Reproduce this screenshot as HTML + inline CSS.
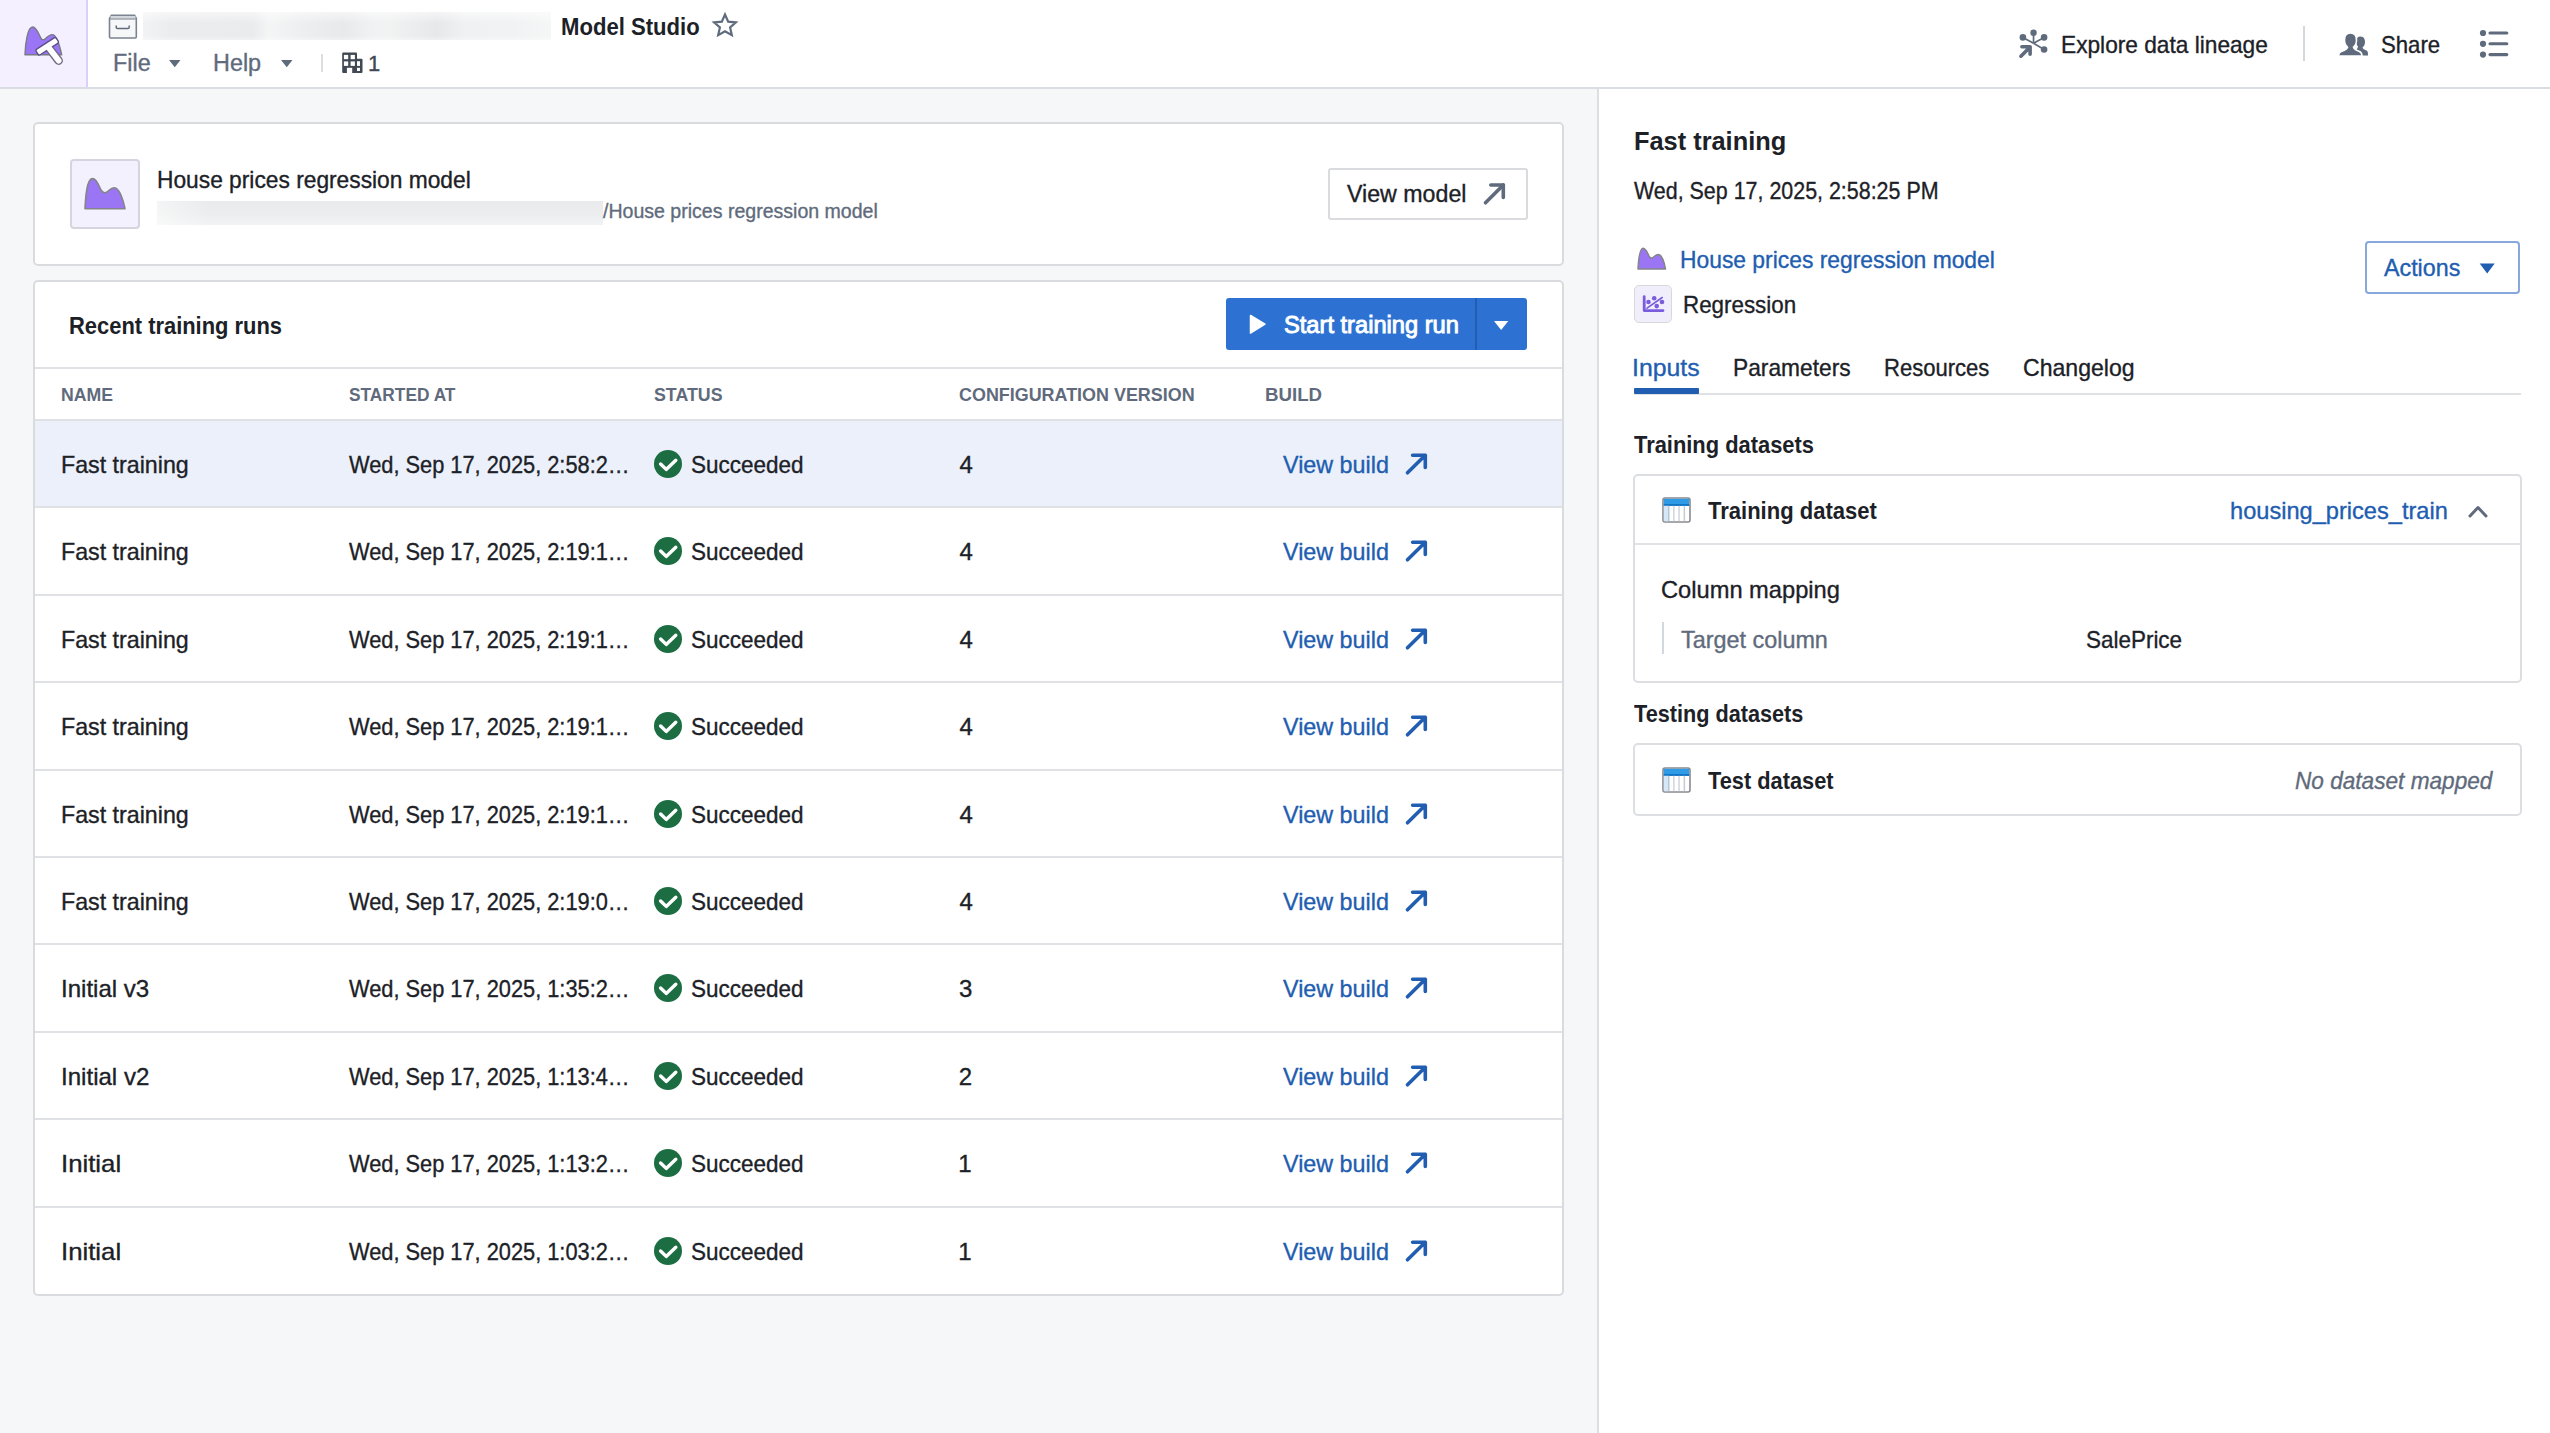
<!DOCTYPE html>
<html><head><meta charset="utf-8"><title>Model Studio</title>
<style>
html,body{margin:0;padding:0;width:2550px;height:1433px;overflow:hidden;background:#f6f7f9;font-family:"Liberation Sans",sans-serif;}
.t{position:absolute;white-space:nowrap;transform-origin:0 0;}
.a{position:absolute;box-sizing:border-box;}
svg{position:absolute;overflow:visible;}
</style></head><body>
<!-- ============ HEADER ============ -->
<div class="a" style="left:0;top:0;width:2550px;height:87px;background:#ffffff;"></div>
<div class="a" style="left:0;top:87px;width:2550px;height:2px;background:#d9dde3;"></div>
<div class="a" style="left:0;top:0;width:86px;height:87px;background:#f4f0ff;"></div>
<div class="a" style="left:86px;top:0;width:1.5px;height:87px;background:#dccffd;"></div>
<!-- logo -->
<svg style="left:0;top:0" width="86" height="87" viewBox="0 0 86 87">
  <path d="M25 54.8 C25.3 44 27.5 27 32.7 27 C37 27 39.5 36.5 41.5 39 C42.5 40 43.5 40 44.5 39.5 C46.5 37.5 49 34.6 52.4 34.6 C56.5 34.6 60 47 61.7 54.8 Z" fill="#9a76f6" stroke="#777b82" stroke-width="1.4" stroke-linejoin="round"/>
  <line x1="48.6" y1="47.5" x2="58.6" y2="60.6" stroke="#6f6b85" stroke-width="8.6" stroke-linecap="round"/>
  <rect x="35.2" y="43" width="24" height="6.6" rx="1.6" transform="rotate(-33 47.2 46.3)" fill="#fff" stroke="#5b4f8a" stroke-width="1.4"/>
  <line x1="48.6" y1="47.5" x2="58.6" y2="60.6" stroke="#fff" stroke-width="5.8" stroke-linecap="round"/>
</svg>
<!-- archive icon -->
<svg style="left:106px;top:12px" width="34" height="30" viewBox="0 0 34 30">
  <path d="M5.5 3.2 L28.5 3.2 L30.3 6.5 L30.3 25 Q30.3 26 29.3 26 L4.5 26 Q3.5 26 3.5 25 L3.5 6.5 Z" fill="#f6f7f9" stroke="#7b838e" stroke-width="1.6" stroke-linejoin="round"/>
  <rect x="4.5" y="4" width="25" height="2.6" fill="#d3d8de"/><line x1="4" y1="7" x2="29.8" y2="7" stroke="#8a929c" stroke-width="1.2"/>
  <path d="M10.2 13.6 L10.2 15.2 Q10.2 16.6 11.6 16.6 L21.8 16.6 Q23.2 16.6 23.2 15.2 L23.2 13.6" fill="none" stroke="#5f6b7c" stroke-width="1.5"/>
</svg>
<!-- blurred path -->
<div class="a" style="left:143px;top:12px;width:408px;height:28px;background:linear-gradient(180deg,rgba(255,255,255,.55) 0%,rgba(255,255,255,0) 40%,rgba(255,255,255,0) 85%,rgba(255,255,255,.35) 100%),linear-gradient(90deg,#f2f3f4 0%,#ebeced 7%,#eaebed 27%,#f4f5f5 31%,#eeeff0 38%,#e8e9eb 49%,#f0f1f2 56%,#f1f2f2 60%,#e7e8ea 72%,#f0f1f2 79%,#f1f2f3 90%,#f5f6f6 100%);"></div>
<!-- star -->
<svg style="left:710px;top:11px" width="30" height="30" viewBox="0 0 30 30">
  <path d="M15 3.5 L18.2 10.6 L25.9 11.4 L20.1 16.5 L21.8 24.1 L15 20.2 L8.2 24.1 L9.9 16.5 L4.1 11.4 L11.8 10.6 Z" fill="none" stroke="#5f6b7c" stroke-width="2.2" stroke-linejoin="miter"/>
</svg>
<!-- carets -->
<svg style="left:168px;top:59px" width="14" height="10" viewBox="0 0 14 10"><path d="M1 1 L12.5 1 L6.75 8.2 Z" fill="#5f6b7c"/></svg>
<svg style="left:279.6px;top:59px" width="14" height="10" viewBox="0 0 14 10"><path d="M1 1 L12.5 1 L6.75 8.2 Z" fill="#5f6b7c"/></svg>
<div class="a" style="left:321px;top:54px;width:1.5px;height:17.5px;background:#dcdddf;"></div>
<!-- building -->
<svg style="left:341px;top:52px" width="23" height="22" viewBox="0 0 23 22">
  <rect x="1.2" y="0.5" width="14.8" height="20.4" rx="1" fill="#404854"/>
  <rect x="15" y="6.8" width="6.5" height="14.1" rx="1" fill="#404854"/>
  <g fill="#fff">
  <rect x="2.9" y="2.9" width="4.3" height="4.3"/><rect x="9.6" y="2.9" width="4.3" height="4.3"/>
  <rect x="2.9" y="9.4" width="4.3" height="4.5"/><rect x="9.6" y="9.4" width="4.3" height="4.5"/>
  <rect x="5.9" y="15.8" width="5.3" height="5.5"/>
  <rect x="16" y="9.2" width="3" height="4.7"/><rect x="16" y="15.8" width="3" height="3.2"/>
  </g>
</svg>
<!-- lineage icon -->
<svg style="left:2017px;top:27px" width="34" height="34" viewBox="0 0 34 34">
  <g fill="#5f6b7c">
    <circle cx="16.55" cy="5.8" r="3.2"/><circle cx="5.9" cy="10.4" r="3.3"/><circle cx="27.1" cy="10.4" r="3.3"/><circle cx="27.1" cy="22.5" r="3.3"/>
  </g>
  <g stroke="#5f6b7c" stroke-width="1.7" fill="none">
    <line x1="16.55" y1="6" x2="16.55" y2="16.3"/><line x1="5.9" y1="10.4" x2="16.55" y2="16.3"/><line x1="27.1" y1="10.4" x2="16.55" y2="16.3"/><line x1="27.1" y1="22.5" x2="16.55" y2="16.3"/>
  </g>
  <path d="M4.9 19.7 L13.1 19.7 L13.1 27.2 M3.9 29.2 L13.1 19.9" fill="none" stroke="#5f6b7c" stroke-width="3.6" stroke-linecap="round" stroke-linejoin="round"/>
</svg>
<div class="a" style="left:2303px;top:26px;width:1.5px;height:35px;background:#d3d8de;"></div>
<!-- share icon -->
<svg style="left:2337px;top:31px" width="34" height="28" viewBox="0 0 34 28">
  <g fill="#5f6b7c">
    <path d="M23.5 5.5 C27 5.5 28 8.5 28 11 C28 13.5 27 15.5 25.5 16.5 C26 18 27 18.5 29.5 19.5 C31 20 31 22 31 24.5 L22.5 24.5 C22.5 21 21 19.5 19.5 18.5 C20.5 17.5 21 16.5 21 15.5 C19.5 14 19 12 19 10.5 C19 7.5 20.5 5.5 23.5 5.5 Z"/>
    <path d="M13.5 2 C18 2 19.5 5.5 19.5 9 C19.5 12.5 18 15 16.5 16.2 C17 18 18.5 19 22 20.2 C24.5 21 25 23 25 25 L1.5 25 C1.5 23 2.5 21 5 20.2 C8.5 19 10 18 10.5 16.2 C9 15 7.5 12.5 7.5 9 C7.5 5.5 9 2 13.5 2 Z" stroke="#ffffff" stroke-width="1.6"/>
  </g>
</svg>
<!-- list icon -->
<svg style="left:2478px;top:28px" width="32" height="32" viewBox="0 0 32 32">
  <g fill="#5f6b7c"><circle cx="5" cy="5" r="3.1"/><circle cx="5" cy="15.8" r="3.1"/><circle cx="5" cy="26.6" r="3.1"/></g>
  <g stroke="#5f6b7c" stroke-width="3.1" stroke-linecap="round"><line x1="12" y1="5" x2="28.8" y2="5"/><line x1="12" y1="15.8" x2="28.8" y2="15.8"/><line x1="12" y1="26.6" x2="28.8" y2="26.6"/></g>
</svg>

<!-- ============ RIGHT PANEL BG ============ -->
<div class="a" style="left:1597px;top:89px;width:953px;height:1344px;background:#ffffff;"></div>
<div class="a" style="left:1597px;top:89px;width:2px;height:1344px;background:#dcdee1;"></div>

<!-- ============ CARD 1 ============ -->
<div class="a" style="left:33px;top:122px;width:1531px;height:144px;background:#fff;border:2px solid #d9dbde;border-radius:5px;"></div>
<div class="a" style="left:70px;top:159px;width:70px;height:70px;background:#f4f1fe;border:2px solid #d6d4de;border-radius:4px;"></div>
<svg style="left:70px;top:159px" width="70" height="70" viewBox="0 0 70 70">
  <path transform="translate(14.8 19.6)" d="M0.2 30.1 C0.7 20.4 1.7 0.4 7.6 0 C11.7 -0.3 14.2 7.4 16.2 11.4 C17.7 13.9 19.2 14.3 20.4 14.2 C22.7 14 25.7 9.1 29.5 9.1 C34.7 9.1 38.7 22.4 40.2 30.1 Z" fill="#9a76f5" stroke="#858589" stroke-width="1.6" stroke-linejoin="round"/>
</svg>
<div class="a" style="left:157px;top:201px;width:446px;height:24px;background:linear-gradient(90deg,rgba(255,255,255,.5) 0%,rgba(255,255,255,0) 12%),linear-gradient(180deg,#e9eaec 0%,#ecedee 55%,#f2f3f4 100%);"></div>
<div class="a" style="left:1328px;top:168px;width:200px;height:52px;background:#fff;border:2px solid #d9dbde;border-radius:3px;"></div>
<svg style="left:1480px;top:180px" width="30" height="30" viewBox="0 0 30 30">
  <path d="M5.5 22.8 L23.3 5" fill="none" stroke="#5f6b7c" stroke-width="3.6" stroke-linecap="round"/>
  <path d="M10.8 5 L23.3 5 L23.3 17.5" fill="none" stroke="#5f6b7c" stroke-width="3.6" stroke-linecap="round" stroke-linejoin="round"/>
</svg>

<!-- ============ CARD 2 ============ -->
<div class="a" style="left:33px;top:280px;width:1531px;height:1016px;background:#fff;border:2px solid #d9dbde;border-radius:5px;"></div>
<div class="a" style="left:1226px;top:298px;width:301px;height:52px;background:#2d72d2;border-radius:3px;"></div>
<div class="a" style="left:1475px;top:298px;width:1.5px;height:52px;background:#215db0;"></div>
<svg style="left:1248px;top:313px" width="20" height="22" viewBox="0 0 20 22"><path d="M2.5 2.5 L17 11.2 L2.5 20 Z" fill="#fff" stroke="#fff" stroke-width="1.5" stroke-linejoin="round"/></svg>
<svg style="left:1492px;top:319px" width="18" height="13" viewBox="0 0 18 13"><path d="M2 2 L16.3 2 L9.15 11 Z" fill="#fff"/></svg>
<!-- table header borders -->
<div class="a" style="left:35px;top:367px;width:1527px;height:2px;background:#dfe1e4;"></div>
<div class="a" style="left:35px;top:419px;width:1527px;height:2px;background:#dfe1e4;"></div>
<div class="a" style="left:35px;top:421px;width:1527px;height:85.9px;background:#ebf0fa;"></div>
<div class="a" style="left:35px;top:506.4px;width:1527px;height:2px;background:#dfe1e4;"></div>
<svg style="left:654px;top:450.0px" width="28" height="28" viewBox="0 0 28 28"><circle cx="14" cy="14" r="14" fill="#1c6e42"/><path d="M6.6 14 L12.2 19.4 L21.8 10.2" fill="none" stroke="#fff" stroke-width="3.4" stroke-linecap="round" stroke-linejoin="round"/></svg>
<svg style="left:1403px;top:450.0px" width="28" height="28" viewBox="0 0 28 28"><path d="M4.5 22.8 L22.3 5.3 M9.6 5.3 L22.3 5.3 L22.3 17.5" fill="none" stroke="#215db0" stroke-width="3.6" stroke-linecap="round" stroke-linejoin="round"/></svg>
<div class="a" style="left:35px;top:593.8px;width:1527px;height:2px;background:#dfe1e4;"></div>
<svg style="left:654px;top:537.4px" width="28" height="28" viewBox="0 0 28 28"><circle cx="14" cy="14" r="14" fill="#1c6e42"/><path d="M6.6 14 L12.2 19.4 L21.8 10.2" fill="none" stroke="#fff" stroke-width="3.4" stroke-linecap="round" stroke-linejoin="round"/></svg>
<svg style="left:1403px;top:537.4px" width="28" height="28" viewBox="0 0 28 28"><path d="M4.5 22.8 L22.3 5.3 M9.6 5.3 L22.3 5.3 L22.3 17.5" fill="none" stroke="#215db0" stroke-width="3.6" stroke-linecap="round" stroke-linejoin="round"/></svg>
<div class="a" style="left:35px;top:681.2px;width:1527px;height:2px;background:#dfe1e4;"></div>
<svg style="left:654px;top:624.8px" width="28" height="28" viewBox="0 0 28 28"><circle cx="14" cy="14" r="14" fill="#1c6e42"/><path d="M6.6 14 L12.2 19.4 L21.8 10.2" fill="none" stroke="#fff" stroke-width="3.4" stroke-linecap="round" stroke-linejoin="round"/></svg>
<svg style="left:1403px;top:624.8px" width="28" height="28" viewBox="0 0 28 28"><path d="M4.5 22.8 L22.3 5.3 M9.6 5.3 L22.3 5.3 L22.3 17.5" fill="none" stroke="#215db0" stroke-width="3.6" stroke-linecap="round" stroke-linejoin="round"/></svg>
<div class="a" style="left:35px;top:768.6px;width:1527px;height:2px;background:#dfe1e4;"></div>
<svg style="left:654px;top:712.2px" width="28" height="28" viewBox="0 0 28 28"><circle cx="14" cy="14" r="14" fill="#1c6e42"/><path d="M6.6 14 L12.2 19.4 L21.8 10.2" fill="none" stroke="#fff" stroke-width="3.4" stroke-linecap="round" stroke-linejoin="round"/></svg>
<svg style="left:1403px;top:712.2px" width="28" height="28" viewBox="0 0 28 28"><path d="M4.5 22.8 L22.3 5.3 M9.6 5.3 L22.3 5.3 L22.3 17.5" fill="none" stroke="#215db0" stroke-width="3.6" stroke-linecap="round" stroke-linejoin="round"/></svg>
<div class="a" style="left:35px;top:856.0px;width:1527px;height:2px;background:#dfe1e4;"></div>
<svg style="left:654px;top:799.6px" width="28" height="28" viewBox="0 0 28 28"><circle cx="14" cy="14" r="14" fill="#1c6e42"/><path d="M6.6 14 L12.2 19.4 L21.8 10.2" fill="none" stroke="#fff" stroke-width="3.4" stroke-linecap="round" stroke-linejoin="round"/></svg>
<svg style="left:1403px;top:799.6px" width="28" height="28" viewBox="0 0 28 28"><path d="M4.5 22.8 L22.3 5.3 M9.6 5.3 L22.3 5.3 L22.3 17.5" fill="none" stroke="#215db0" stroke-width="3.6" stroke-linecap="round" stroke-linejoin="round"/></svg>
<div class="a" style="left:35px;top:943.4px;width:1527px;height:2px;background:#dfe1e4;"></div>
<svg style="left:654px;top:887.0px" width="28" height="28" viewBox="0 0 28 28"><circle cx="14" cy="14" r="14" fill="#1c6e42"/><path d="M6.6 14 L12.2 19.4 L21.8 10.2" fill="none" stroke="#fff" stroke-width="3.4" stroke-linecap="round" stroke-linejoin="round"/></svg>
<svg style="left:1403px;top:887.0px" width="28" height="28" viewBox="0 0 28 28"><path d="M4.5 22.8 L22.3 5.3 M9.6 5.3 L22.3 5.3 L22.3 17.5" fill="none" stroke="#215db0" stroke-width="3.6" stroke-linecap="round" stroke-linejoin="round"/></svg>
<div class="a" style="left:35px;top:1030.8px;width:1527px;height:2px;background:#dfe1e4;"></div>
<svg style="left:654px;top:974.4px" width="28" height="28" viewBox="0 0 28 28"><circle cx="14" cy="14" r="14" fill="#1c6e42"/><path d="M6.6 14 L12.2 19.4 L21.8 10.2" fill="none" stroke="#fff" stroke-width="3.4" stroke-linecap="round" stroke-linejoin="round"/></svg>
<svg style="left:1403px;top:974.4px" width="28" height="28" viewBox="0 0 28 28"><path d="M4.5 22.8 L22.3 5.3 M9.6 5.3 L22.3 5.3 L22.3 17.5" fill="none" stroke="#215db0" stroke-width="3.6" stroke-linecap="round" stroke-linejoin="round"/></svg>
<div class="a" style="left:35px;top:1118.2px;width:1527px;height:2px;background:#dfe1e4;"></div>
<svg style="left:654px;top:1061.8px" width="28" height="28" viewBox="0 0 28 28"><circle cx="14" cy="14" r="14" fill="#1c6e42"/><path d="M6.6 14 L12.2 19.4 L21.8 10.2" fill="none" stroke="#fff" stroke-width="3.4" stroke-linecap="round" stroke-linejoin="round"/></svg>
<svg style="left:1403px;top:1061.8px" width="28" height="28" viewBox="0 0 28 28"><path d="M4.5 22.8 L22.3 5.3 M9.6 5.3 L22.3 5.3 L22.3 17.5" fill="none" stroke="#215db0" stroke-width="3.6" stroke-linecap="round" stroke-linejoin="round"/></svg>
<div class="a" style="left:35px;top:1205.6px;width:1527px;height:2px;background:#dfe1e4;"></div>
<svg style="left:654px;top:1149.2px" width="28" height="28" viewBox="0 0 28 28"><circle cx="14" cy="14" r="14" fill="#1c6e42"/><path d="M6.6 14 L12.2 19.4 L21.8 10.2" fill="none" stroke="#fff" stroke-width="3.4" stroke-linecap="round" stroke-linejoin="round"/></svg>
<svg style="left:1403px;top:1149.2px" width="28" height="28" viewBox="0 0 28 28"><path d="M4.5 22.8 L22.3 5.3 M9.6 5.3 L22.3 5.3 L22.3 17.5" fill="none" stroke="#215db0" stroke-width="3.6" stroke-linecap="round" stroke-linejoin="round"/></svg>
<svg style="left:654px;top:1236.6px" width="28" height="28" viewBox="0 0 28 28"><circle cx="14" cy="14" r="14" fill="#1c6e42"/><path d="M6.6 14 L12.2 19.4 L21.8 10.2" fill="none" stroke="#fff" stroke-width="3.4" stroke-linecap="round" stroke-linejoin="round"/></svg>
<svg style="left:1403px;top:1236.6px" width="28" height="28" viewBox="0 0 28 28"><path d="M4.5 22.8 L22.3 5.3 M9.6 5.3 L22.3 5.3 L22.3 17.5" fill="none" stroke="#215db0" stroke-width="3.6" stroke-linecap="round" stroke-linejoin="round"/></svg>

<!-- ============ RIGHT PANEL CONTENT ============ -->
<svg style="left:1636px;top:246px" width="32" height="25" viewBox="0 0 32 25">
  <path transform="translate(1.9 2.2) scale(0.687)" d="M0.2 30.1 C0.7 20.4 1.7 0.4 7.6 0 C11.7 -0.3 14.2 7.4 16.2 11.4 C17.7 13.9 19.2 14.3 20.4 14.2 C22.7 14 25.7 9.1 29.5 9.1 C34.7 9.1 38.7 22.4 40.2 30.1 Z" fill="#9a76f5" stroke="#858589" stroke-width="1.5" vector-effect="non-scaling-stroke" stroke-linejoin="round"/>
</svg>
<div class="a" style="left:1634px;top:285px;width:38px;height:38px;background:#f1eefc;border:1.5px solid #d9d9dc;border-radius:5px;"></div>
<svg style="left:1634px;top:285px" width="38" height="38" viewBox="0 0 38 38">
  <g fill="#7a5ddd">
    <path d="M10.2 11.6 L10.2 25.6 L29 25.6" fill="none" stroke="#7a5ddd" stroke-width="2.8" stroke-linecap="round" stroke-linejoin="round"/>
    <line x1="13" y1="23.2" x2="28.2" y2="12.5" stroke="#7a5ddd" stroke-width="1.6" stroke-linecap="round"/>
    <circle cx="14.5" cy="17" r="2.3"/><circle cx="20.2" cy="13.2" r="2.3"/><circle cx="28" cy="17" r="2.3"/><circle cx="22.7" cy="21.1" r="2.3"/>
  </g>
</svg>
<div class="a" style="left:2365px;top:241px;width:155px;height:52.5px;background:#fff;border:2px solid #86a8dc;border-radius:4px;"></div>
<svg style="left:2478px;top:262px" width="18" height="13" viewBox="0 0 18 13"><path d="M1.7 1.5 L16.7 1.5 L9.2 11.5 Z" fill="#215db0"/></svg>
<div class="a" style="left:1634px;top:393px;width:887px;height:2px;background:#dfe2e5;"></div>
<div class="a" style="left:1634px;top:388px;width:65px;height:5.5px;background:#215db0;border-radius:1px;"></div>

<div class="a" style="left:1633px;top:474px;width:889px;height:209px;background:#fff;border:2px solid #dcdee1;border-radius:5px;"></div>
<div class="a" style="left:1635px;top:543px;width:885px;height:2px;background:#e0e2e5;"></div>
<svg style="left:1661.5px;top:496.5px" width="29" height="26" viewBox="0 0 29 26">
  <rect x="1" y="1" width="27" height="24" rx="2" fill="#ffffff" stroke="#888b90" stroke-width="1.6"/>
  <rect x="1.8" y="1.8" width="25.4" height="7" fill="#2f9ae6"/>
  <rect x="1.8" y="7.2" width="25.4" height="1.6" fill="#0a6fbf"/>
  <rect x="1.8" y="8.8" width="4.6" height="15.4" fill="#d6e8f7"/>
  <rect x="6" y="8.8" width="1.5" height="15.4" fill="#b3c6d6"/>
  <rect x="11.2" y="8.8" width="1.3" height="15.4" fill="#c8d0d9"/>
  <rect x="16.4" y="8.8" width="1.3" height="15.4" fill="#c8d0d9"/>
  <rect x="21.6" y="8.8" width="1.5" height="15.4" fill="#c3ccd5"/>
</svg>
<svg style="left:2466px;top:501px" width="24" height="20" viewBox="0 0 24 20"><path d="M4 15 L12 6.5 L20 15" fill="none" stroke="#5f6b7c" stroke-width="3" stroke-linecap="round" stroke-linejoin="round"/></svg>
<div class="a" style="left:1662px;top:622px;width:1.5px;height:32px;background:#d3d8de;"></div>

<div class="a" style="left:1633px;top:743px;width:889px;height:73px;background:#fff;border:2px solid #dcdee1;border-radius:5px;"></div>
<svg style="left:1661.5px;top:766.5px" width="29" height="26" viewBox="0 0 29 26">
  <rect x="1" y="1" width="27" height="24" rx="2" fill="#ffffff" stroke="#888b90" stroke-width="1.6"/>
  <rect x="1.8" y="1.8" width="25.4" height="7" fill="#2f9ae6"/>
  <rect x="1.8" y="7.2" width="25.4" height="1.6" fill="#0a6fbf"/>
  <rect x="1.8" y="8.8" width="4.6" height="15.4" fill="#d6e8f7"/>
  <rect x="6" y="8.8" width="1.5" height="15.4" fill="#b3c6d6"/>
  <rect x="11.2" y="8.8" width="1.3" height="15.4" fill="#c8d0d9"/>
  <rect x="16.4" y="8.8" width="1.3" height="15.4" fill="#c8d0d9"/>
  <rect x="21.6" y="8.8" width="1.5" height="15.4" fill="#c3ccd5"/>
</svg>

<span class="t" style="left:561.23px;top:15.00px;font-size:24px;line-height:24px;color:#1c2127;font-weight:700;transform:scaleX(0.9203);">Model Studio</span>
<span class="t" style="left:112.81px;top:52.00px;font-size:23.5px;line-height:23.5px;color:#5f6b7c;-webkit-text-stroke:0.35px currentColor;transform:scaleX(0.9943);">File</span>
<span class="t" style="left:212.81px;top:52.00px;font-size:23.5px;line-height:23.5px;color:#5f6b7c;-webkit-text-stroke:0.35px currentColor;transform:scaleX(0.9956);">Help</span>
<span class="t" style="left:367.90px;top:53.00px;font-size:22px;line-height:22px;color:#404854;-webkit-text-stroke:0.35px currentColor;">1</span>
<span class="t" style="left:2060.61px;top:33.00px;font-size:24px;line-height:24px;color:#1c2127;-webkit-text-stroke:0.35px currentColor;transform:scaleX(0.9453);">Explore data lineage</span>
<span class="t" style="left:2380.89px;top:33.00px;font-size:24px;line-height:24px;color:#1c2127;-webkit-text-stroke:0.35px currentColor;transform:scaleX(0.9225);">Share</span>
<span class="t" style="left:157.30px;top:168.00px;font-size:24px;line-height:24px;color:#1c2127;-webkit-text-stroke:0.35px currentColor;transform:scaleX(0.9483);">House prices regression model</span>
<span class="t" style="left:603.00px;top:201.00px;font-size:20px;line-height:20px;color:#5f6b7c;-webkit-text-stroke:0.35px currentColor;transform:scaleX(0.9771);">/House prices regression model</span>
<span class="t" style="left:1347.30px;top:183.00px;font-size:23.5px;line-height:23.5px;color:#1c2127;-webkit-text-stroke:0.35px currentColor;transform:scaleX(0.9866);">View model</span>
<span class="t" style="left:69.14px;top:314.00px;font-size:24px;line-height:24px;color:#1c2127;font-weight:700;transform:scaleX(0.9129);">Recent training runs</span>
<span class="t" style="left:1284.49px;top:314.00px;font-size:23.5px;line-height:23.5px;color:#ffffff;-webkit-text-stroke:0.9px currentColor;transform:scaleX(1.0070);">Start training run</span>
<span class="t" style="left:61.49px;top:385.00px;font-size:19px;line-height:19px;color:#5f6b7c;font-weight:700;transform:scaleX(0.9295);">NAME</span>
<span class="t" style="left:349.25px;top:385.00px;font-size:19px;line-height:19px;color:#5f6b7c;font-weight:700;transform:scaleX(0.9112);">STARTED AT</span>
<span class="t" style="left:654.44px;top:385.00px;font-size:19px;line-height:19px;color:#5f6b7c;font-weight:700;transform:scaleX(0.9359);">STATUS</span>
<span class="t" style="left:959.25px;top:385.00px;font-size:19px;line-height:19px;color:#5f6b7c;font-weight:700;transform:scaleX(0.9431);">CONFIGURATION VERSION</span>
<span class="t" style="left:1264.62px;top:385.00px;font-size:19px;line-height:19px;color:#5f6b7c;font-weight:700;transform:scaleX(0.9821);">BUILD</span>
<span class="t" style="left:60.97px;top:453.00px;font-size:24px;line-height:24px;color:#1c2127;-webkit-text-stroke:0.35px currentColor;transform:scaleX(0.9673);">Fast training</span>
<span class="t" style="left:349.11px;top:453.00px;font-size:24px;line-height:24px;color:#1c2127;-webkit-text-stroke:0.35px currentColor;transform:scaleX(0.9078);">Wed, Sep 17, 2025, 2:58:2…</span>
<span class="t" style="left:690.77px;top:453.00px;font-size:24px;line-height:24px;color:#1c2127;-webkit-text-stroke:0.35px currentColor;transform:scaleX(0.9362);">Succeeded</span>
<span class="t" style="left:959.50px;top:453.00px;font-size:24px;line-height:24px;color:#1c2127;-webkit-text-stroke:0.35px currentColor;">4</span>
<span class="t" style="left:1282.90px;top:453.00px;font-size:24px;line-height:24px;color:#215db0;-webkit-text-stroke:0.35px currentColor;transform:scaleX(0.9720);">View build</span>
<span class="t" style="left:60.97px;top:540.00px;font-size:24px;line-height:24px;color:#1c2127;-webkit-text-stroke:0.35px currentColor;transform:scaleX(0.9673);">Fast training</span>
<span class="t" style="left:349.11px;top:540.00px;font-size:24px;line-height:24px;color:#1c2127;-webkit-text-stroke:0.35px currentColor;transform:scaleX(0.9078);">Wed, Sep 17, 2025, 2:19:1…</span>
<span class="t" style="left:690.77px;top:540.00px;font-size:24px;line-height:24px;color:#1c2127;-webkit-text-stroke:0.35px currentColor;transform:scaleX(0.9362);">Succeeded</span>
<span class="t" style="left:959.50px;top:540.00px;font-size:24px;line-height:24px;color:#1c2127;-webkit-text-stroke:0.35px currentColor;">4</span>
<span class="t" style="left:1282.90px;top:540.00px;font-size:24px;line-height:24px;color:#215db0;-webkit-text-stroke:0.35px currentColor;transform:scaleX(0.9720);">View build</span>
<span class="t" style="left:60.97px;top:628.00px;font-size:24px;line-height:24px;color:#1c2127;-webkit-text-stroke:0.35px currentColor;transform:scaleX(0.9673);">Fast training</span>
<span class="t" style="left:349.11px;top:628.00px;font-size:24px;line-height:24px;color:#1c2127;-webkit-text-stroke:0.35px currentColor;transform:scaleX(0.9078);">Wed, Sep 17, 2025, 2:19:1…</span>
<span class="t" style="left:690.77px;top:628.00px;font-size:24px;line-height:24px;color:#1c2127;-webkit-text-stroke:0.35px currentColor;transform:scaleX(0.9362);">Succeeded</span>
<span class="t" style="left:959.50px;top:628.00px;font-size:24px;line-height:24px;color:#1c2127;-webkit-text-stroke:0.35px currentColor;">4</span>
<span class="t" style="left:1282.90px;top:628.00px;font-size:24px;line-height:24px;color:#215db0;-webkit-text-stroke:0.35px currentColor;transform:scaleX(0.9720);">View build</span>
<span class="t" style="left:60.97px;top:715.00px;font-size:24px;line-height:24px;color:#1c2127;-webkit-text-stroke:0.35px currentColor;transform:scaleX(0.9673);">Fast training</span>
<span class="t" style="left:349.11px;top:715.00px;font-size:24px;line-height:24px;color:#1c2127;-webkit-text-stroke:0.35px currentColor;transform:scaleX(0.9078);">Wed, Sep 17, 2025, 2:19:1…</span>
<span class="t" style="left:690.77px;top:715.00px;font-size:24px;line-height:24px;color:#1c2127;-webkit-text-stroke:0.35px currentColor;transform:scaleX(0.9362);">Succeeded</span>
<span class="t" style="left:959.50px;top:715.00px;font-size:24px;line-height:24px;color:#1c2127;-webkit-text-stroke:0.35px currentColor;">4</span>
<span class="t" style="left:1282.90px;top:715.00px;font-size:24px;line-height:24px;color:#215db0;-webkit-text-stroke:0.35px currentColor;transform:scaleX(0.9720);">View build</span>
<span class="t" style="left:60.97px;top:803.00px;font-size:24px;line-height:24px;color:#1c2127;-webkit-text-stroke:0.35px currentColor;transform:scaleX(0.9673);">Fast training</span>
<span class="t" style="left:349.11px;top:803.00px;font-size:24px;line-height:24px;color:#1c2127;-webkit-text-stroke:0.35px currentColor;transform:scaleX(0.9078);">Wed, Sep 17, 2025, 2:19:1…</span>
<span class="t" style="left:690.77px;top:803.00px;font-size:24px;line-height:24px;color:#1c2127;-webkit-text-stroke:0.35px currentColor;transform:scaleX(0.9362);">Succeeded</span>
<span class="t" style="left:959.50px;top:803.00px;font-size:24px;line-height:24px;color:#1c2127;-webkit-text-stroke:0.35px currentColor;">4</span>
<span class="t" style="left:1282.90px;top:803.00px;font-size:24px;line-height:24px;color:#215db0;-webkit-text-stroke:0.35px currentColor;transform:scaleX(0.9720);">View build</span>
<span class="t" style="left:60.97px;top:890.00px;font-size:24px;line-height:24px;color:#1c2127;-webkit-text-stroke:0.35px currentColor;transform:scaleX(0.9673);">Fast training</span>
<span class="t" style="left:349.11px;top:890.00px;font-size:24px;line-height:24px;color:#1c2127;-webkit-text-stroke:0.35px currentColor;transform:scaleX(0.9078);">Wed, Sep 17, 2025, 2:19:0…</span>
<span class="t" style="left:690.77px;top:890.00px;font-size:24px;line-height:24px;color:#1c2127;-webkit-text-stroke:0.35px currentColor;transform:scaleX(0.9362);">Succeeded</span>
<span class="t" style="left:959.50px;top:890.00px;font-size:24px;line-height:24px;color:#1c2127;-webkit-text-stroke:0.35px currentColor;">4</span>
<span class="t" style="left:1282.90px;top:890.00px;font-size:24px;line-height:24px;color:#215db0;-webkit-text-stroke:0.35px currentColor;transform:scaleX(0.9720);">View build</span>
<span class="t" style="left:60.69px;top:977.00px;font-size:24px;line-height:24px;color:#1c2127;-webkit-text-stroke:0.35px currentColor;transform:scaleX(1.0024);">Initial v3</span>
<span class="t" style="left:349.11px;top:977.00px;font-size:24px;line-height:24px;color:#1c2127;-webkit-text-stroke:0.35px currentColor;transform:scaleX(0.9078);">Wed, Sep 17, 2025, 1:35:2…</span>
<span class="t" style="left:690.77px;top:977.00px;font-size:24px;line-height:24px;color:#1c2127;-webkit-text-stroke:0.35px currentColor;transform:scaleX(0.9362);">Succeeded</span>
<span class="t" style="left:959.10px;top:977.00px;font-size:24px;line-height:24px;color:#1c2127;-webkit-text-stroke:0.35px currentColor;">3</span>
<span class="t" style="left:1282.90px;top:977.00px;font-size:24px;line-height:24px;color:#215db0;-webkit-text-stroke:0.35px currentColor;transform:scaleX(0.9720);">View build</span>
<span class="t" style="left:60.69px;top:1065.00px;font-size:24px;line-height:24px;color:#1c2127;-webkit-text-stroke:0.35px currentColor;transform:scaleX(1.0035);">Initial v2</span>
<span class="t" style="left:349.11px;top:1065.00px;font-size:24px;line-height:24px;color:#1c2127;-webkit-text-stroke:0.35px currentColor;transform:scaleX(0.9078);">Wed, Sep 17, 2025, 1:13:4…</span>
<span class="t" style="left:690.77px;top:1065.00px;font-size:24px;line-height:24px;color:#1c2127;-webkit-text-stroke:0.35px currentColor;transform:scaleX(0.9362);">Succeeded</span>
<span class="t" style="left:958.80px;top:1065.00px;font-size:24px;line-height:24px;color:#1c2127;-webkit-text-stroke:0.35px currentColor;">2</span>
<span class="t" style="left:1282.90px;top:1065.00px;font-size:24px;line-height:24px;color:#215db0;-webkit-text-stroke:0.35px currentColor;transform:scaleX(0.9720);">View build</span>
<span class="t" style="left:60.54px;top:1152.00px;font-size:24px;line-height:24px;color:#1c2127;-webkit-text-stroke:0.35px currentColor;transform:scaleX(1.0728);">Initial</span>
<span class="t" style="left:349.11px;top:1152.00px;font-size:24px;line-height:24px;color:#1c2127;-webkit-text-stroke:0.35px currentColor;transform:scaleX(0.9078);">Wed, Sep 17, 2025, 1:13:2…</span>
<span class="t" style="left:690.77px;top:1152.00px;font-size:24px;line-height:24px;color:#1c2127;-webkit-text-stroke:0.35px currentColor;transform:scaleX(0.9362);">Succeeded</span>
<span class="t" style="left:958.20px;top:1152.00px;font-size:24px;line-height:24px;color:#1c2127;-webkit-text-stroke:0.35px currentColor;">1</span>
<span class="t" style="left:1282.90px;top:1152.00px;font-size:24px;line-height:24px;color:#215db0;-webkit-text-stroke:0.35px currentColor;transform:scaleX(0.9720);">View build</span>
<span class="t" style="left:60.54px;top:1240.00px;font-size:24px;line-height:24px;color:#1c2127;-webkit-text-stroke:0.35px currentColor;transform:scaleX(1.0728);">Initial</span>
<span class="t" style="left:349.11px;top:1240.00px;font-size:24px;line-height:24px;color:#1c2127;-webkit-text-stroke:0.35px currentColor;transform:scaleX(0.9078);">Wed, Sep 17, 2025, 1:03:2…</span>
<span class="t" style="left:690.77px;top:1240.00px;font-size:24px;line-height:24px;color:#1c2127;-webkit-text-stroke:0.35px currentColor;transform:scaleX(0.9362);">Succeeded</span>
<span class="t" style="left:958.20px;top:1240.00px;font-size:24px;line-height:24px;color:#1c2127;-webkit-text-stroke:0.35px currentColor;">1</span>
<span class="t" style="left:1282.90px;top:1240.00px;font-size:24px;line-height:24px;color:#215db0;-webkit-text-stroke:0.35px currentColor;transform:scaleX(0.9720);">View build</span>
<span class="t" style="left:1634.28px;top:128.00px;font-size:26.5px;line-height:26.5px;color:#1c2127;font-weight:700;transform:scaleX(0.9569);">Fast training</span>
<span class="t" style="left:1634.31px;top:179.00px;font-size:24px;line-height:24px;color:#1c2127;-webkit-text-stroke:0.35px currentColor;transform:scaleX(0.8927);">Wed, Sep 17, 2025, 2:58:25 PM</span>
<span class="t" style="left:1679.60px;top:248.00px;font-size:24px;line-height:24px;color:#215db0;-webkit-text-stroke:0.35px currentColor;transform:scaleX(0.9517);">House prices regression model</span>
<span class="t" style="left:1683.44px;top:293.00px;font-size:24px;line-height:24px;color:#1c2127;-webkit-text-stroke:0.35px currentColor;transform:scaleX(0.9321);">Regression</span>
<span class="t" style="left:2383.60px;top:256.00px;font-size:24px;line-height:24px;color:#215db0;-webkit-text-stroke:0.35px currentColor;transform:scaleX(0.9691);">Actions</span>
<span class="t" style="left:1632.13px;top:356.00px;font-size:24px;line-height:24px;color:#215db0;-webkit-text-stroke:0.35px currentColor;transform:scaleX(1.0337);">Inputs</span>
<span class="t" style="left:1733.10px;top:356.00px;font-size:24px;line-height:24px;color:#1c2127;-webkit-text-stroke:0.35px currentColor;transform:scaleX(0.9480);">Parameters</span>
<span class="t" style="left:1883.76px;top:356.00px;font-size:24px;line-height:24px;color:#1c2127;-webkit-text-stroke:0.35px currentColor;transform:scaleX(0.9186);">Resources</span>
<span class="t" style="left:2022.85px;top:356.00px;font-size:24px;line-height:24px;color:#1c2127;-webkit-text-stroke:0.35px currentColor;transform:scaleX(0.9612);">Changelog</span>
<span class="t" style="left:1634.13px;top:433.00px;font-size:24px;line-height:24px;color:#1c2127;font-weight:700;transform:scaleX(0.9118);">Training datasets</span>
<span class="t" style="left:1707.52px;top:499.00px;font-size:24px;line-height:24px;color:#1c2127;font-weight:700;transform:scaleX(0.9172);">Training dataset</span>
<span class="t" style="left:2230.33px;top:499.00px;font-size:24px;line-height:24px;color:#215db0;-webkit-text-stroke:0.35px currentColor;transform:scaleX(0.9835);">housing_prices_train</span>
<span class="t" style="left:1661.12px;top:578.00px;font-size:24px;line-height:24px;color:#1c2127;-webkit-text-stroke:0.35px currentColor;transform:scaleX(0.9860);">Column mapping</span>
<span class="t" style="left:1681.01px;top:628.00px;font-size:24px;line-height:24px;color:#5f6b7c;-webkit-text-stroke:0.35px currentColor;transform:scaleX(0.9744);">Target column</span>
<span class="t" style="left:2085.97px;top:628.00px;font-size:24px;line-height:24px;color:#1c2127;-webkit-text-stroke:0.35px currentColor;transform:scaleX(0.9354);">SalePrice</span>
<span class="t" style="left:1634.13px;top:702.00px;font-size:24px;line-height:24px;color:#1c2127;font-weight:700;transform:scaleX(0.9029);">Testing datasets</span>
<span class="t" style="left:1707.53px;top:769.00px;font-size:24px;line-height:24px;color:#1c2127;font-weight:700;transform:scaleX(0.9078);">Test dataset</span>
<span class="t" style="left:2294.54px;top:769.00px;font-size:24px;line-height:24px;color:#5f6b7c;-webkit-text-stroke:0.35px currentColor;font-style:italic;transform:scaleX(0.9422);">No dataset mapped</span>
</body></html>
